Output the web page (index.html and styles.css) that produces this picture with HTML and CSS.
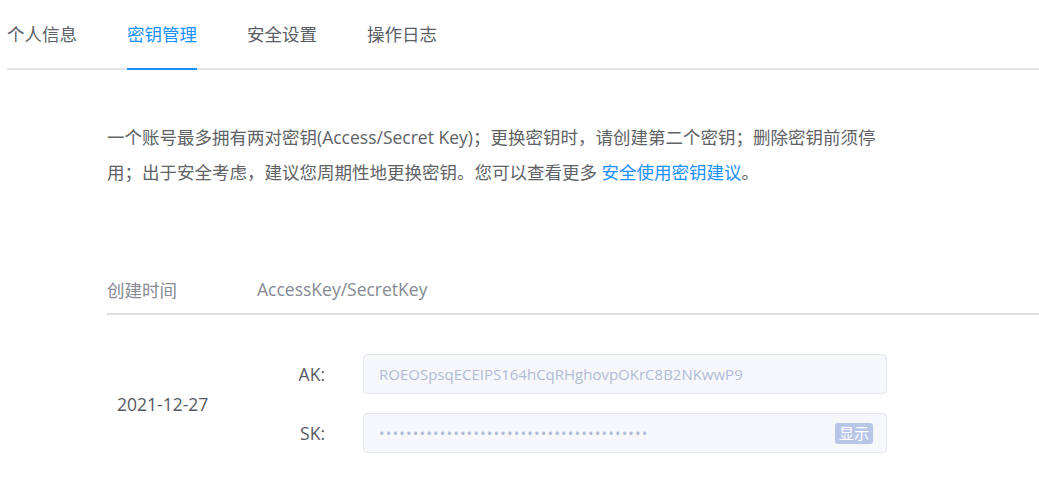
FILE: index.html
```html
<!DOCTYPE html>
<html lang="zh">
<head>
<meta charset="utf-8">
<link rel="stylesheet" href="styles.css">
</head>
<body>
<div class="page">
  <nav class="tabs">
    <div class="tab">个人信息</div>
    <div class="tab active">密钥管理</div>
    <div class="tab">安全设置</div>
    <div class="tab">操作日志</div>
  </nav>
  <div class="content">
    <p class="notice">一个账号最多拥有两对密钥(Access/Secret Key)；更换密钥时，请创建第二个密钥；删除密钥前须停用；出于安全考虑，建议您周期性地更换密钥。您可以查看更多 <a class="link">安全使用密钥建议</a>。</p>
    <div class="table">
      <div class="thead">
        <div class="col-date">创建时间</div>
        <div class="col-key">AccessKey/SecretKey</div>
      </div>
      <div class="row">
        <div class="col-date cell-date">2021-12-27</div>
        <div class="col-key keys">
          <div class="field">
            <span class="label">AK:</span>
            <div class="input">ROEOSpsqECEIPS164hCqRHghovpOKrC8B2NKwwP9</div>
          </div>
          <div class="field">
            <span class="label">SK:</span>
            <div class="input secret"><span class="dots">••••••••••••••••••••••••••••••••••••••••</span><span class="btn">显示</span></div>
          </div>
        </div>
      </div>
    </div>
  </div>
</div>
</body>
</html>
```

FILE: styles.css
```css
html, body {
  margin: 0;
  padding: 0;
  background: #fff;
}
body {
  font-family: "Open Sans", "Noto Sans CJK SC", sans-serif;
  color: #606266;
}
.tabs {
  display: flex;
  gap: 50px;
  margin-left: 7px;
  border-bottom: 2px solid #e4e7ed;
  height: 68px;
}
.tab {
  font-size: 17.5px;
  line-height: 68px;
  height: 68px;
  color: #5a5e66;
  position: relative;
  white-space: nowrap;
}
.tab.active {
  color: #1890ff;
}
.tab.active::after {
  content: "";
  position: absolute;
  left: 0;
  right: 0;
  bottom: -2px;
  height: 2px;
  background: #1890ff;
}
.content {
  padding-left: 107px;
}
.notice {
  margin: 50px 0 0;
  width: 782px;
  font-size: 17.5px;
  line-height: 35px;
  color: #606266;
}
.link {
  color: #1890ff;
  text-decoration: none;
}
.table {
  margin-top: 75px;
}
.thead {
  display: flex;
  height: 48px;
  align-items: center;
  border-bottom: 2px solid #dcdfe6;
  font-size: 17.5px;
  color: #868a94;
}
.col-date {
  width: 150px;
  flex: none;
}
.row {
  display: flex;
  align-items: center;
  padding-top: 39px;
}
.cell-date {
  padding-left: 10px;
  box-sizing: border-box;
  font-size: 17.5px;
  color: #555a63;
}
.keys {
  display: flex;
  flex-direction: column;
  gap: 19px;
}
.field {
  display: flex;
  align-items: center;
}
.label {
  width: 68px;
  text-align: right;
  margin-right: 38px;
  font-size: 17.5px;
  color: #555a63;
}
.input {
  width: 524px;
  height: 40px;
  box-sizing: border-box;
  border: 1px solid #e4e7ed;
  border-radius: 4px;
  background: #f5f7fa;
  padding: 0 13px 0 15px;
  display: flex;
  align-items: center;
  font-size: 15px;
  color: #b1bcd6;
}
.secret {
  justify-content: space-between;
}
.dots {
  font-size: 15px;
  letter-spacing: 1.1px;
  color: #b1bcd6;
}
.btn {
  background: #b7c6e6;
  color: #fff;
  font-size: 15px;
  line-height: 21px;
  padding: 0 4px;
  border-radius: 3px;
}
```
